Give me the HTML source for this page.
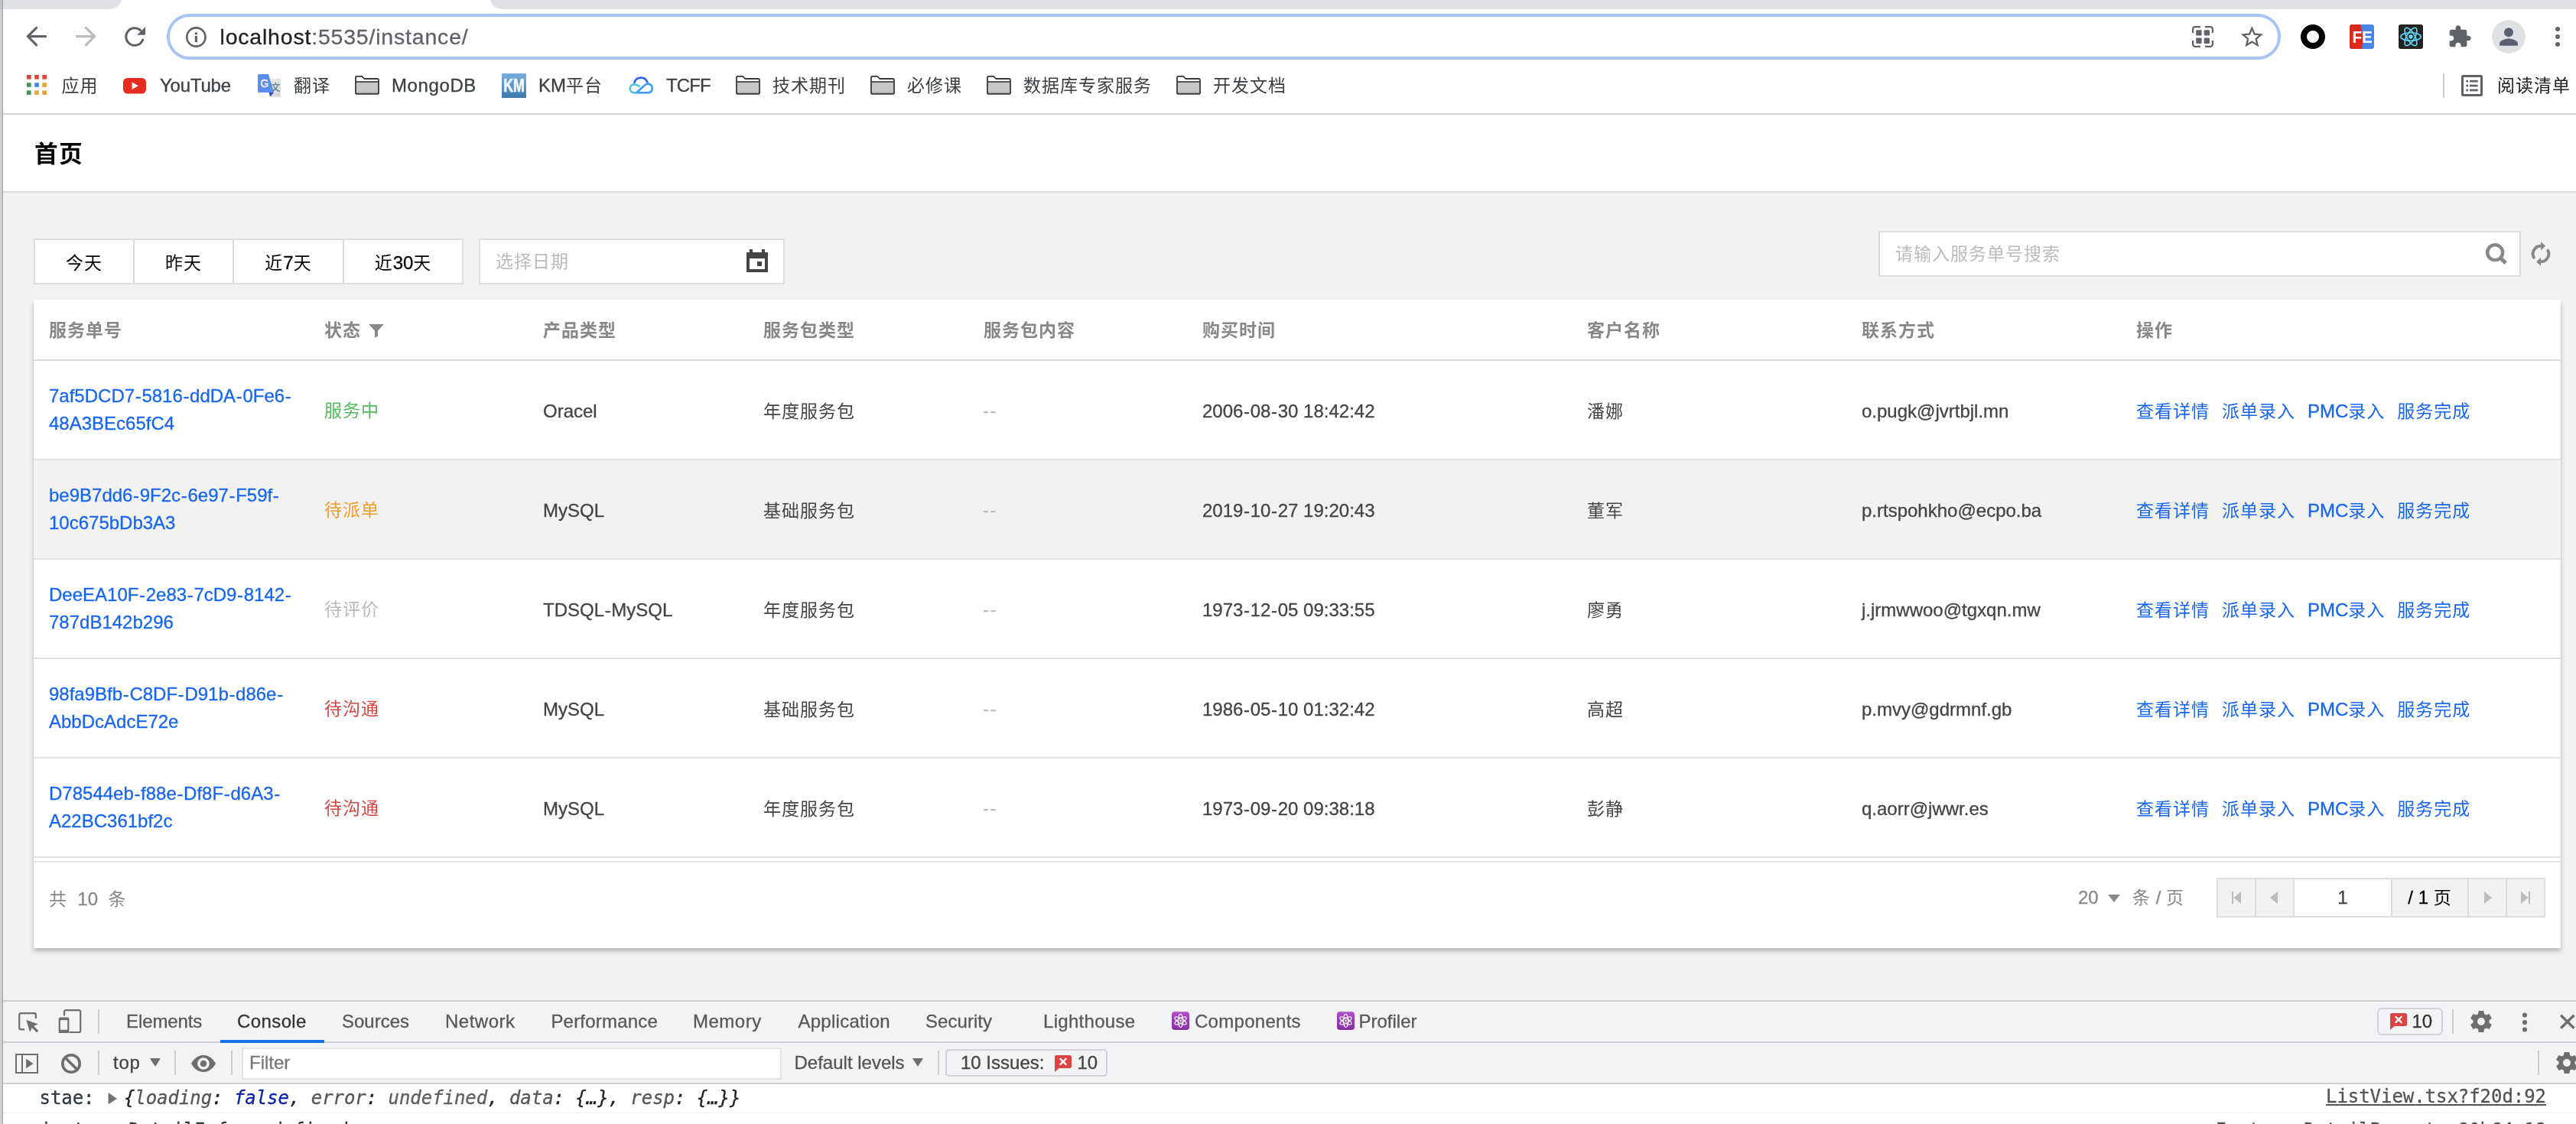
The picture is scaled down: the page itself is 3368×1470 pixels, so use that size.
<!DOCTYPE html>
<html lang="zh-CN">
<head>
<meta charset="utf-8">
<title>首页</title>
<style>
*{box-sizing:border-box;margin:0;padding:0}
html,body{width:3368px;height:1470px;overflow:hidden;background:#fff}
body{position:relative;-webkit-text-stroke:.3px;font-family:"Liberation Sans","Noto Sans CJK SC",sans-serif;font-size:24px;color:#444;-webkit-font-smoothing:antialiased}
.abs{position:absolute}
svg{display:block;position:absolute;overflow:visible}
a{color:#1766f2;text-decoration:none}
.cj{font-size:.9583em;letter-spacing:.0435em;-webkit-text-stroke:0}

/* ---------- window edge ---------- */
#edge{left:0;top:0;width:4px;height:1470px;background:linear-gradient(90deg,#d2d2d2 0,#cfcfcf 2.4px,#a4a4a4 2.9px,#a9a9a9 3.6px,#e8e8e8 4px)}
#edgetop{left:0;top:0;width:4px;height:12px;background:linear-gradient(90deg,#c1c5c9 0,#bfc3c7 2.4px,#9b9da0 2.9px,#a0a2a5 3.6px,#d5d7db 4px)}

/* ---------- chrome top ---------- */
#tabL{left:4px;top:-12px;width:156px;height:24px;background:#dfe1e5;border-bottom-right-radius:17px}
#tabR{left:640px;top:-12px;width:2728px;height:24px;background:#dfe1e5;border-bottom-left-radius:17px}
#tabwhite{left:4px;top:0;width:3364px;height:12px;background:#fff}
#omni{left:218px;top:18px;width:2764px;height:60px;border:4px solid #a6c4f6;border-radius:30px;background:#fff}
#url{left:287.5px;top:27.5px;font-size:28.5px;line-height:40px;color:#5f6368;white-space:nowrap;letter-spacing:.8px}
#url b{font-weight:400;color:#202124}
.bm{top:92px;height:40px;line-height:40px;font-size:24px;color:#3c4043;white-space:nowrap}
#bmline{left:4px;top:148px;width:3364px;height:2px;background:#d3d5d9}

/* ---------- page ---------- */
#pagebg{left:4px;top:252px;width:3364px;height:1056px;background:#f2f2f2}
#hdline{left:4px;top:250px;width:3364px;height:2px;background:#dcdcdc}
#title{left:45px;top:177px;font-size:32px;letter-spacing:1.5px;line-height:48px;font-weight:700;color:#000;font-family:"Liberation Sans","Noto Sans CJK SC",sans-serif}

.btn{top:312px;height:60px;border:2px solid #ddd;background:#fff;color:#000;text-align:center;line-height:59px;font-size:24px;white-space:nowrap}
#date{left:626px;top:312px;width:400px;height:60px;border:2px solid #ddd;background:#fff}
#date>span{white-space:nowrap;position:absolute;left:20px;top:0;line-height:56px;color:#bbb}
#search{left:2456px;top:302px;width:840px;height:60px;border:2px solid #ddd;background:#fff}
#search>span{white-space:nowrap;position:absolute;left:20px;top:0;line-height:56px;color:#bbb}

/* ---------- card / table ---------- */
#card{left:44px;top:392px;width:3304px;height:848px;background:#fff;box-shadow:0 4px 6px 0 rgba(48,50,62,.3)}
.th{top:.4px;height:78px;line-height:80px;font-weight:700;color:#888;white-space:nowrap}
.hline{left:0;width:3304px;height:2px;background:#ddd}
.row{left:0;width:3304px;height:128px}
.row.hover{background:#f2f2f2}
.row>div{position:absolute;white-space:nowrap;line-height:36px;top:48px}
.row>.id{top:28px;white-space:normal;width:330px}
.c1{left:20px}.c2{left:380px}.c3{left:666px}.c4{left:954px}.c5{left:1242px}.c6{left:1528px}.c7{left:2031px}.c8{left:2390px}.c9{left:2749px}
.row .c2{top:47px}
.row .c4,.row .c7,.row .c9{top:47.5px}
.hy{padding:0 .67px}
.row .c5{color:#bbb;top:47px;letter-spacing:1.4px;margin-left:-1px}
.c9 a{margin-right:16px}
.s-ok{color:#55b95f}.s-warn{color:#f19b2a}.s-wait{color:#bbb}.s-err{color:#d34842}
#foot{left:0;top:734px;width:3304px;height:2px;background:#e5e5e5}
#total{left:20px;top:766px;line-height:36px;color:#888;white-space:pre}
.pg{top:756px;height:52px;border:2px solid #ddd;background:#f2f2f2}

/* ---------- devtools ---------- */
#dt{left:4px;top:1308px;width:3364px;height:162px;background:#fff;font-family:"Liberation Sans",sans-serif}
#dt .bar{left:0;width:3364px;background:#f1f3f4}
#dt .ln{left:0;width:3364px;height:2px;background:#cbcdd1}
.tab{top:6px;height:44px;line-height:44px;font-size:24px;color:#585858;white-space:nowrap}
.mono{font-family:"DejaVu Sans Mono","Liberation Mono",monospace;font-size:24px;white-space:pre;line-height:36px;letter-spacing:-.05px}
</style>
</head>
<body>
<div id="root" style="position:absolute;left:0;top:0;width:3368px;height:1470px;will-change:transform">
<!-- window edge -->
<div class="abs" id="edge"></div>
<div class="abs" id="edgetop"></div>

<!-- tab strip -->
<div class="abs" id="tabwhite"></div>
<div class="abs" id="tabL"></div>
<div class="abs" id="tabR"></div>

<!-- CHROME-TOOLBAR -->
<svg style="left:30px;top:30px" width="36" height="36" viewBox="0 0 36 36"><path d="M17.6 6.4 6.4 17.6 17.6 28.8M7 17.6H29.6" fill="none" stroke="#5f6368" stroke-width="3.1" stroke-linecap="round" stroke-linejoin="miter"/></svg>
<svg style="left:94px;top:30px" width="36" height="36" viewBox="0 0 36 36"><path d="M18.4 6.4 29.6 17.6 18.4 28.8M29 17.6H6.4" fill="none" stroke="#bbbcbe" stroke-width="3.1" stroke-linecap="round" stroke-linejoin="miter"/></svg>
<svg style="left:158px;top:30px" width="36" height="36" viewBox="0 0 36 36"><path d="M28.6 22.2A11.3 11.3 0 1 1 25.6 9.6" fill="none" stroke="#5f6368" stroke-width="3.1" stroke-linecap="round"/><path d="M32 5.2V15.8H21.2Z" fill="#5f6368"/></svg>
<div class="abs" id="omni"></div>
<svg style="left:242px;top:34px" width="29" height="29" viewBox="0 0 29 29"><circle cx="14.4" cy="14.5" r="12.1" fill="none" stroke="#5f6368" stroke-width="2.6"/><rect x="12.8" y="8.4" width="3.2" height="2.9" fill="#5f6368"/><rect x="12.8" y="13" width="3.2" height="8.2" fill="#5f6368"/></svg>
<div class="abs" id="url"><b>localhost</b>:5535/instance/</div>
<!-- qr -->
<svg style="left:2866px;top:34px" width="28" height="28" viewBox="0 0 28 28"><g fill="none" stroke="#5f6368" stroke-width="2.2"><path d="M1.1 9V4.2a3.1 3.1 0 0 1 3.1-3.1H11"/><path d="M17 1.1h6.8a3.1 3.1 0 0 1 3.1 3.1V9"/><path d="M26.9 19v4.8a3.1 3.1 0 0 1-3.1 3.1H17"/><path d="M11 26.9H4.2a3.1 3.1 0 0 1-3.1-3.1V19"/></g><g fill="#5f6368"><rect x="5.2" y="5.2" width="7.4" height="7.4" rx="1"/><rect x="15.6" y="5.2" width="7.4" height="7.4" rx="1"/><rect x="5.2" y="15.6" width="7.4" height="7.4" rx="1"/><rect x="15.6" y="15.6" width="7.4" height="7.4" rx="1"/></g></svg>
<!-- star -->
<svg style="left:2926.6px;top:30.8px" width="34.8" height="34.8" viewBox="0 0 24 24"><path d="M22 9.24l-7.19-.62L12 2 9.19 8.63 2 9.24l5.46 4.73L5.82 21 12 17.27 18.18 21l-1.63-7.03L22 9.24zM12 15.4l-3.76 2.27 1-4.28-3.32-2.88 4.38-.38L12 6.1l1.71 4.04 4.38.38-3.32 2.88 1 4.28L12 15.4z" fill="#5f6368"/></svg>
<!-- ext: black ring -->
<svg style="left:3008px;top:32px" width="32" height="32" viewBox="0 0 32 32"><circle cx="16" cy="16" r="12" fill="none" stroke="#000" stroke-width="8"/></svg>
<!-- ext: FE -->
<svg style="left:3072px;top:32px" width="32" height="32" viewBox="0 0 32 32"><rect width="32" height="32" rx="3.5" fill="#4a86e8"/><path d="M3.5 0H14.5Q19 16 16 32H3.5A3.5 3.5 0 0 1 0 28.5V3.5A3.5 3.5 0 0 1 3.5 0Z" fill="#dc2a1d"/><text x="3.4" y="23.6" font-family="Liberation Sans,sans-serif" font-weight="700" font-size="21.5" fill="#fff" textLength="26.5" lengthAdjust="spacingAndGlyphs">FE</text></svg>
<!-- ext: react -->
<svg style="left:3136px;top:32px" width="32" height="32" viewBox="0 0 32 32"><rect width="32" height="32" rx="3" fill="#222"/><g fill="none" stroke="#61dafb" stroke-width="1.6"><ellipse cx="16" cy="16" rx="13.2" ry="5.2"/><ellipse cx="16" cy="16" rx="13.2" ry="5.2" transform="rotate(60 16 16)"/><ellipse cx="16" cy="16" rx="13.2" ry="5.2" transform="rotate(120 16 16)"/></g><circle cx="16" cy="16" r="2.7" fill="#61dafb"/></svg>
<!-- puzzle -->
<svg style="left:3200px;top:32px" width="32" height="32" viewBox="0 0 24 24"><path d="M20.5 11H19V7c0-1.1-.9-2-2-2h-4V3.5C13 2.120 11.880 1 10.5 1S8 2.120 8 3.5V5H4c-1.1 0-1.990.9-1.990 2v3.8H3.5c1.490 0 2.7 1.210 2.7 2.7s-1.210 2.7-2.7 2.7H2V20c0 1.1.9 2 2 2h3.8v-1.5c0-1.490 1.210-2.7 2.7-2.7 1.490 0 2.7 1.210 2.7 2.7V22H17c1.1 0 2-.9 2-2v-4h1.5c1.380 0 2.5-1.120 2.5-2.5S21.880 11 20.5 11z" fill="#5f6368"/></svg>
<!-- avatar -->
<svg style="left:3258px;top:26px" width="44" height="44" viewBox="0 0 44 44"><circle cx="22" cy="22" r="22" fill="#dfe1e5"/><circle cx="22" cy="16.2" r="6" fill="#5a6072"/><path d="M10 33.8v-2.6c0-4.5 8-6.8 12-6.8s12 2.3 12 6.8v2.6z" fill="#5a6072"/></svg>
<!-- menu -->
<svg style="left:3338px;top:32px" width="12" height="32" viewBox="0 0 12 32"><g fill="#5f6368"><circle cx="6" cy="6" r="3"/><circle cx="6" cy="16" r="3"/><circle cx="6" cy="26" r="3"/></g></svg>

<!-- BOOKMARKS -->
<svg width="0" height="0" style="left:0;top:0"><defs><symbol id="fold" viewBox="0 0 32 25"><rect x="1.9" y="8.6" width="28.2" height="14.6" fill="#c8c8c8"/><rect x="1.9" y="21" width="28.2" height="2.1" fill="#b2b2b2"/><path d="M1 2.3a1.5 1.5 0 0 1 1.5-1.5H9.2L12.2 4H29.5a1.5 1.5 0 0 1 1.5 1.5V22.45a1.5 1.5 0 0 1-1.5 1.5H2.5a1.5 1.5 0 0 1-1.5-1.5Z" fill="none" stroke="#383838" stroke-width="1.8" stroke-linejoin="round"/><path d="M1 8H31" stroke="#383838" stroke-width="1.7"/></symbol></defs></svg>
<svg style="left:35px;top:98px" width="26" height="26" viewBox="0 0 26 26"><g><rect x="0" y="0" width="5.6" height="5.6" fill="#db4437"/><rect x="10.2" y="0" width="5.6" height="5.6" fill="#db4437"/><rect x="20.4" y="0" width="5.6" height="5.6" fill="#db4437"/><rect x="0" y="10.2" width="5.6" height="5.6" fill="#3f9b4f"/><rect x="10.2" y="10.2" width="5.6" height="5.6" fill="#4285f4"/><rect x="20.4" y="10.2" width="5.6" height="5.6" fill="#e9a233"/><rect x="0" y="20.4" width="5.6" height="5.6" fill="#3f9b4f"/><rect x="10.2" y="20.4" width="5.6" height="5.6" fill="#e9a233"/><rect x="20.4" y="20.4" width="5.6" height="5.6" fill="#e9a233"/></g></svg>
<div class="abs bm" style="left:80.5px"><span class="cj">应用</span></div>
<svg style="left:161px;top:101.5px" width="30" height="21" viewBox="0 0 30 21"><rect width="30" height="20.5" rx="5.5" fill="#e62d20"/><path d="M11.6 5.6 19.8 10.3 11.6 15Z" fill="#fff"/></svg>
<div class="abs bm" style="left:209px;letter-spacing:-.2px">YouTube</div>
<svg style="left:336px;top:96px" width="32" height="32" viewBox="0 0 32 32"><defs><linearGradient id="trg" x1="0" y1="0" x2="1" y2="1"><stop offset="0" stop-color="#ececec"/><stop offset="1" stop-color="#d2d2d2"/></linearGradient></defs><rect x="17.2" y="7.1" width="13.6" height="23.7" rx="1.2" fill="url(#trg)"/><text x="18.3" y="23.3" font-family="Noto Sans CJK SC,sans-serif" font-size="12" fill="#5c7a89" stroke="#5c7a89" stroke-width=".3">文</text><path d="M15.5 25.1 22.3 24.5 17.3 30.8Z" fill="#3949ab"/><path d="M2.6 1.05H13.8Q14.9 1.05 15.2 2.1L22.3 25.1H2.6A1.5 1.5 0 0 1 1.1 23.6V2.55A1.5 1.5 0 0 1 2.6 1.05Z" fill="#5a8dee"/><text x="4.4" y="18.1" font-family="Liberation Sans,sans-serif" font-size="13.8" fill="#f5f3ec" stroke="#f5f3ec" stroke-width=".5">G</text></svg>
<div class="abs bm" style="left:384px"><span class="cj">翻译</span></div>
<svg class="fold" style="left:464px;top:99px" width="32" height="25" viewBox="0 0 32 25"><use href="#fold"/></svg>
<div class="abs bm" style="left:512px;letter-spacing:.6px">MongoDB</div>
<svg style="left:656px;top:96px" width="32" height="32" viewBox="0 0 32 32"><defs><linearGradient id="kmg" x1="0" y1="0" x2="0" y2="1"><stop offset="0" stop-color="#76aedd"/><stop offset=".55" stop-color="#5a96cb"/><stop offset="1" stop-color="#3b76ab"/></linearGradient></defs><rect width="32" height="32" fill="url(#kmg)"/><text x="2.3" y="24.3" font-family="Liberation Sans,sans-serif" font-weight="700" font-size="23.3" fill="#f4f8fc" stroke="#f4f8fc" stroke-width=".7" textLength="27.6" lengthAdjust="spacingAndGlyphs">KM</text></svg>
<div class="abs bm" style="left:704px">KM<span class="cj">平台</span></div>
<svg style="left:822px;top:100px" width="33" height="24" viewBox="0 0 33 24"><path d="M7.3 8.2A9 9 0 0 1 24.3 7.2" fill="none" stroke="#2a67f4" stroke-width="2.6" stroke-linecap="round"/><path d="M8.5 21.2H25.2A5.75 5.75 0 1 0 21.2 11.3L10.6 20.8" fill="none" stroke="#3c9af6" stroke-width="2.6" stroke-linecap="round" stroke-linejoin="round"/><path d="M13.6 12.8C11.8 11.2 9.6 10.5 7 10.5A5.35 5.35 0 0 0 7 21.2H10" fill="none" stroke="#4cc3d9" stroke-width="2.6" stroke-linecap="round"/></svg>
<div class="abs bm" style="left:871px;letter-spacing:-.9px">TCFF</div>
<svg class="fold" style="left:962px;top:99px" width="32" height="25" viewBox="0 0 32 25"><use href="#fold"/></svg>
<div class="abs bm" style="left:1010px"><span class="cj">技术期刊</span></div>
<svg class="fold" style="left:1138px;top:99px" width="32" height="25" viewBox="0 0 32 25"><use href="#fold"/></svg>
<div class="abs bm" style="left:1186px"><span class="cj">必修课</span></div>
<svg class="fold" style="left:1290px;top:99px" width="32" height="25" viewBox="0 0 32 25"><use href="#fold"/></svg>
<div class="abs bm" style="left:1338px"><span class="cj">数据库专家服务</span></div>
<svg class="fold" style="left:1538px;top:99px" width="32" height="25" viewBox="0 0 32 25"><use href="#fold"/></svg>
<div class="abs bm" style="left:1586px"><span class="cj">开发文档</span></div>
<div class="abs" style="left:3194px;top:96px;width:2px;height:32px;background:#cdcfd2"></div>
<svg style="left:3218px;top:98px" width="28" height="28" viewBox="0 0 28 28"><rect x="1.5" y="1.5" width="25" height="25" rx="1" fill="none" stroke="#5f6368" stroke-width="3"/><g fill="#5f6368"><rect x="6.3" y="6.8" width="2.7" height="2.7"/><rect x="11" y="6.8" width="10.7" height="2.7"/><rect x="6.3" y="12.7" width="2.7" height="2.7"/><rect x="11" y="12.7" width="10.7" height="2.7"/><rect x="6.3" y="18.6" width="2.7" height="2.7"/><rect x="11" y="18.6" width="10.7" height="2.7"/></g></svg>
<div class="abs bm" style="left:3265px;color:#202124;letter-spacing:-.5px"><span class="cj">阅读清单</span></div>

<div class="abs" id="bmline"></div>

<!-- page -->
<div class="abs" id="title"><span class="cj">首页</span></div>
<div class="abs" id="hdline"></div>
<div class="abs" id="pagebg"></div>

<!-- TOOLBAR -->
<div class="abs btn" style="left:44px;width:132px"><span class="cj">今天</span></div>
<div class="abs btn" style="left:174px;width:132px"><span class="cj">昨天</span></div>
<div class="abs btn" style="left:304px;width:146px"><span class="cj">近</span>7<span class="cj">天</span></div>
<div class="abs btn" style="left:448px;width:158px"><span class="cj">近</span>30<span class="cj">天</span></div>
<div class="abs" id="date"><span><span class="cj">选择日期</span></span>
<svg style="left:348px;top:12px" width="28" height="30" viewBox="0 0 28 30"><path d="M4 0h4v4h12V0h4v4h4v26H0V4h4Z M4 12v14h20V12Z M14 16h6v6h-6Z" fill="#444" fill-rule="evenodd"/></svg>
</div>
<div class="abs" id="search"><span><span class="cj">请输入服务单号搜索</span></span>
<svg style="left:791px;top:13.4px" width="28.8" height="28.8" viewBox="0 0 30 30"><circle cx="13.7" cy="13.7" r="10.4" fill="none" stroke="#888" stroke-width="4.6"/><path d="M20.6 20.6 28.2 28.2" stroke="#888" stroke-width="5.4"/></svg>
</div>
<svg style="left:3308px;top:314.2px" width="28" height="36" viewBox="0 0 28 36"><g fill="none" stroke="#888" stroke-width="3.9"><path d="M5.67 24.05A10.3 10.3 0 0 1 14.4 7.7"/><path d="M22.54 12.24A10.3 10.3 0 0 1 13.8 28.3"/></g><path d="M14.2 1.9 20 7.7 14.2 13.5Z" fill="#888"/><path d="M14 22.5 8.2 28.3 14 34.1Z" fill="#888"/></svg>

<!-- CARD -->
<div class="abs" id="card">
<div class="abs th c1"><span class="cj">服务单号</span></div>
<div class="abs th c2"><span class="cj">状态</span></div>
<div class="abs th c3"><span class="cj">产品类型</span></div>
<div class="abs th c4"><span class="cj">服务包类型</span></div>
<div class="abs th c5"><span class="cj">服务包内容</span></div>
<div class="abs th c6"><span class="cj">购买时间</span></div>
<div class="abs th c7"><span class="cj">客户名称</span></div>
<div class="abs th c8"><span class="cj">联系方式</span></div>
<div class="abs th c9"><span class="cj">操作</span></div>
<svg style="left:438px;top:32px" width="20" height="18" viewBox="0 0 20 18"><path d="M0 0H20L12 8.6V15.6L8 17.8V8.6Z" fill="#888"/></svg>
<div class="abs hline" style="top:78px;background:#dcdcdc"></div>
<div class="abs row" style="top:80px">
<div class="c1 id"><a>7af5DCD7<span class="hy">-</span>5816<span class="hy">-</span>ddDA<span class="hy">-</span>0Fe6<span class="hy">-</span><br>48A3BEc65fC4</a></div>
<div class="c2 s-ok"><span class="cj">服务中</span></div>
<div class="c3">Oracel</div><div class="c4"><span class="cj">年度服务包</span></div><div class="c5">--</div><div class="c6">2006<span class="hy">-</span>08<span class="hy">-</span>30 18:42:42</div><div class="c7"><span class="cj">潘娜</span></div><div class="c8">o.pugk@jvrtbjl.mn</div>
<div class="c9"><a><span class="cj">查看详情</span></a><a><span class="cj">派单录入</span></a><a>PMC<span class="cj">录入</span></a><a><span class="cj">服务完成</span></a></div>
</div>
<div class="abs hline" style="top:208px;background:#e2e2e2"></div>
<div class="abs row hover" style="top:210px">
<div class="c1 id"><a>be9B7dd6<span class="hy">-</span>9F2c<span class="hy">-</span>6e97<span class="hy">-</span>F59f<span class="hy">-</span><br>10c675bDb3A3</a></div>
<div class="c2 s-warn"><span class="cj">待派单</span></div>
<div class="c3">MySQL</div><div class="c4"><span class="cj">基础服务包</span></div><div class="c5">--</div><div class="c6">2019<span class="hy">-</span>10<span class="hy">-</span>27 19:20:43</div><div class="c7"><span class="cj">董军</span></div><div class="c8">p.rtspohkho@ecpo.ba</div>
<div class="c9"><a><span class="cj">查看详情</span></a><a><span class="cj">派单录入</span></a><a>PMC<span class="cj">录入</span></a><a><span class="cj">服务完成</span></a></div>
</div>
<div class="abs hline" style="top:338px;background:#e2e2e2"></div>
<div class="abs row" style="top:340px">
<div class="c1 id"><a>DeeEA10F<span class="hy">-</span>2e83<span class="hy">-</span>7cD9<span class="hy">-</span>8142<span class="hy">-</span><br>787dB142b296</a></div>
<div class="c2 s-wait"><span class="cj">待评价</span></div>
<div class="c3">TDSQL<span class="hy">-</span>MySQL</div><div class="c4"><span class="cj">年度服务包</span></div><div class="c5">--</div><div class="c6">1973<span class="hy">-</span>12<span class="hy">-</span>05 09:33:55</div><div class="c7"><span class="cj">廖勇</span></div><div class="c8">j.jrmwwoo@tgxqn.mw</div>
<div class="c9"><a><span class="cj">查看详情</span></a><a><span class="cj">派单录入</span></a><a>PMC<span class="cj">录入</span></a><a><span class="cj">服务完成</span></a></div>
</div>
<div class="abs hline" style="top:468px;background:#e2e2e2"></div>
<div class="abs row" style="top:470px">
<div class="c1 id"><a>98fa9Bfb<span class="hy">-</span>C8DF<span class="hy">-</span>D91b<span class="hy">-</span>d86e<span class="hy">-</span><br>AbbDcAdcE72e</a></div>
<div class="c2 s-err"><span class="cj">待沟通</span></div>
<div class="c3">MySQL</div><div class="c4"><span class="cj">基础服务包</span></div><div class="c5">--</div><div class="c6">1986<span class="hy">-</span>05<span class="hy">-</span>10 01:32:42</div><div class="c7"><span class="cj">高超</span></div><div class="c8">p.mvy@gdrmnf.gb</div>
<div class="c9"><a><span class="cj">查看详情</span></a><a><span class="cj">派单录入</span></a><a>PMC<span class="cj">录入</span></a><a><span class="cj">服务完成</span></a></div>
</div>
<div class="abs hline" style="top:598px;background:#e2e2e2"></div>
<div class="abs row" style="top:600px">
<div class="c1 id"><a>D78544eb<span class="hy">-</span>f88e<span class="hy">-</span>Df8F<span class="hy">-</span>d6A3<span class="hy">-</span><br>A22BC361bf2c</a></div>
<div class="c2 s-err"><span class="cj">待沟通</span></div>
<div class="c3">MySQL</div><div class="c4"><span class="cj">年度服务包</span></div><div class="c5">--</div><div class="c6">1973<span class="hy">-</span>09<span class="hy">-</span>20 09:38:18</div><div class="c7"><span class="cj">彭静</span></div><div class="c8">q.aorr@jwwr.es</div>
<div class="c9"><a><span class="cj">查看详情</span></a><a><span class="cj">派单录入</span></a><a>PMC<span class="cj">录入</span></a><a><span class="cj">服务完成</span></a></div>
</div>
<div class="abs hline" style="top:728px;background:#e2e2e2"></div>
<div class="abs" id="foot"></div>
<div class="abs" id="total"><span class="cj">共</span>  10  <span class="cj">条</span></div>
<div class="abs" id="psize" style="left:2673px;top:764px;line-height:36px;color:#888;white-space:nowrap">20</div>
<svg style="left:2712px;top:778px" width="16" height="10" viewBox="0 0 16 10"><path d="M0 0H16L8 10Z" fill="#888"/></svg>
<div class="abs" id="pper" style="left:2744px;top:764px;line-height:36px;color:#888;white-space:pre"><span class="cj">条</span> / <span class="cj">页</span></div>
<div class="abs pg" style="left:2854px;width:52px"><svg style="left:18px;top:16px" width="12" height="16" viewBox="0 0 12 16"><path d="M0 0H2V16H0Z M12 0V16L2.4 8Z" fill="#bbb"/></svg></div>
<div class="abs pg" style="left:2904px;width:52px"><svg style="left:18px;top:16px" width="10" height="16" viewBox="0 0 10 16"><path d="M10 0V16L0 8Z" fill="#bbb"/></svg></div>
<div class="abs pg" style="left:2954px;width:130px;background:#fff;color:#444;text-align:center;line-height:48px">1</div>
<div class="abs pg" style="left:3082px;width:102px;color:#000;text-align:center;line-height:48px;white-space:pre">/ 1 <span class="cj">页</span></div>
<div class="abs pg" style="left:3182px;width:52px"><svg style="left:20px;top:16px" width="10" height="16" viewBox="0 0 10 16"><path d="M0 0V16L10 8Z" fill="#bbb"/></svg></div>
<div class="abs pg" style="left:3232px;width:52px"><svg style="left:18px;top:16px" width="12" height="16" viewBox="0 0 12 16"><path d="M10 0H12V16H10Z M0 0V16L9.6 8Z" fill="#bbb"/></svg></div>
</div>

<!-- DEVTOOLS -->
<div class="abs" id="dt">
<div class="abs bar" style="top:0;height:110px"></div>
<div class="abs ln" style="top:0"></div>
<div class="abs ln" style="top:54px"></div>
<div class="abs ln" style="top:108px"></div>
<svg style="left:19px;top:15.2px" width="28" height="28" viewBox="0 0 28 28"><path d="M9 23.3H4.4a2.2 2.2 0 0 1-2.2-2.2V4.4A2.2 2.2 0 0 1 4.4 2.2H21.7A2.2 2.2 0 0 1 23.9 4.4V9" fill="none" stroke="#6e6e6e" stroke-width="2.2"/><path d="M11.4 11 26.6 16.3 21.2 18.9 27.2 24.9 24.9 27.2 18.9 21.2 16.1 26.8Z" fill="#6e6e6e"/></svg>
<svg style="left:71.6px;top:11.2px" width="32" height="33" viewBox="0 0 32 33"><path d="M8 9.6V4.2A2 2 0 0 1 10 2.2H27.2A2 2 0 0 1 29.2 4.2V29A2 2 0 0 1 27.2 31H15" fill="none" stroke="#6e6e6e" stroke-width="2.2"/><path d="M.7 13.6A2 2 0 0 1 2.7 11.6H12.4A2 2 0 0 1 14.4 13.6V32.1H.7Z" fill="#6e6e6e"/><rect x="2.9" y="15.2" width="9.3" height="12.6" fill="#f1f3f4"/></svg>
<div class="abs" style="left:124px;top:12px;width:2px;height:32px;background:#cdcdcd"></div>
<div class="abs tab" style="left:161px;letter-spacing:-0.1px">Elements</div>
<div class="abs tab" style="left:306px;letter-spacing:0.4px;color:#333">Console</div>
<div class="abs tab" style="left:443px;letter-spacing:0px">Sources</div>
<div class="abs tab" style="left:578px;letter-spacing:0.5px">Network</div>
<div class="abs tab" style="left:716.4px;letter-spacing:0.2px">Performance</div>
<div class="abs tab" style="left:902px;letter-spacing:0.5px">Memory</div>
<div class="abs tab" style="left:1039.4px;letter-spacing:0.28px">Application</div>
<div class="abs tab" style="left:1206px;letter-spacing:0.05px">Security</div>
<div class="abs tab" style="left:1360px;letter-spacing:0.3px">Lighthouse</div>
<div class="abs tab" style="left:1558px;letter-spacing:0.28px">Components</div>
<div class="abs tab" style="left:1772.5px;letter-spacing:0px">Profiler</div>
<div class="abs" style="left:284px;top:52px;width:136px;height:4px;background:#1a73e8"></div>
<svg style="left:1527.7px;top:15px" width="23" height="24" viewBox="0 0 23 24"><defs><linearGradient id="pg1531" x1="0" y1="0" x2="0" y2="1"><stop offset="0" stop-color="#c061d6"/><stop offset=".18" stop-color="#a844c2"/><stop offset="1" stop-color="#8b2ea5"/></linearGradient></defs><rect width="23" height="24" rx="4" fill="url(#pg1531)"/><g fill="none" stroke="#fff" stroke-width="1.25"><ellipse cx="11.5" cy="12" rx="8.6" ry="3.2" transform="rotate(90 11.5 12)"/><ellipse cx="11.5" cy="12" rx="8.6" ry="3.2" transform="rotate(30 11.5 12)"/><ellipse cx="11.5" cy="12" rx="8.6" ry="3.2" transform="rotate(150 11.5 12)"/></g><circle cx="11.5" cy="12" r="1.5" fill="#e9c9f1"/></svg>
<svg style="left:1743.5px;top:15px" width="23" height="24" viewBox="0 0 23 24"><defs><linearGradient id="pg1747" x1="0" y1="0" x2="0" y2="1"><stop offset="0" stop-color="#c061d6"/><stop offset=".18" stop-color="#a844c2"/><stop offset="1" stop-color="#8b2ea5"/></linearGradient></defs><rect width="23" height="24" rx="4" fill="url(#pg1747)"/><g fill="none" stroke="#fff" stroke-width="1.25"><ellipse cx="11.5" cy="12" rx="8.6" ry="3.2" transform="rotate(90 11.5 12)"/><ellipse cx="11.5" cy="12" rx="8.6" ry="3.2" transform="rotate(30 11.5 12)"/><ellipse cx="11.5" cy="12" rx="8.6" ry="3.2" transform="rotate(150 11.5 12)"/></g><circle cx="11.5" cy="12" r="1.5" fill="#e9c9f1"/></svg>
<div class="abs" style="left:3104px;top:10px;width:86px;height:36px;border:2px solid #cfd1d4;border-radius:6px"></div>
<svg style="left:3121px;top:17px" width="22" height="22" viewBox="0 0 22 22"><path d="M2.5 0H19.5A2.5 2.5 0 0 1 22 2.5V14.5A2.5 2.5 0 0 1 19.5 17H5.5L0 22V2.5A2.5 2.5 0 0 1 2.5 0Z" fill="#dc4345"/><path d="M6.8 4.2 15.2 12.6M15.2 4.2 6.8 12.6" stroke="#fff" stroke-width="2.3"/></svg>
<div class="abs tab" style="left:3149.5px;color:#333">10</div>
<div class="abs" style="left:3202px;top:12px;width:2px;height:32px;background:#cdcdcd"></div>
<svg style="left:3226px;top:14px" width="28" height="28" viewBox="0 0 24 24"><path d="M19.43 12.98c.04-.32.07-.64.07-.98s-.03-.66-.07-.98l2.110-1.650c.19-.15.24-.42.120-.64l-2-3.460c-.12-.22-.39-.3-.61-.22l-2.490 1c-.52-.4-1.080-.73-1.690-.98l-.38-2.650C14.460 2.180 14.250 2 14 2h-4c-.25 0-.46.180-.49.420l-.38 2.650c-.61.250-1.170.59-1.690.98l-2.490-1c-.23-.09-.49 0-.61.220l-2 3.460c-.13.220-.07.49.12.64l2.110 1.650c-.04.32-.07.650-.07.980s.03.660.07.980l-2.110 1.650c-.19.150-.24.420-.12.640l2 3.460c.12.220.39.300.61.220l2.490-1c.52.400 1.080.73 1.690.98l.38 2.650c.03.240.24.420.49.420h4c.25 0 .46-.18.490-.42l.38-2.650c.61-.25 1.170-.59 1.690-.98l2.490 1c.23.09.49 0 .61-.22l2-3.460c.12-.22.07-.49-.12-.64l-2.110-1.650zM12 15.5c-1.930 0-3.5-1.570-3.5-3.5s1.570-3.5 3.5-3.5 3.5 1.570 3.5 3.5-1.570 3.5-3.5 3.5z" fill="#6e6e6e" transform="translate(12 12) scale(1.21) translate(-12 -12)"/></svg>
<svg style="left:3293px;top:14.5px" width="8" height="28" viewBox="0 0 8 28"><g fill="#6e6e6e"><circle cx="4" cy="4.5" r="3.1"/><circle cx="4" cy="14" r="3.1"/><circle cx="4" cy="23.5" r="3.1"/></g></svg>
<svg style="left:3341.5px;top:17px" width="24" height="22" viewBox="0 0 24 22"><path d="M2.1 2.8 19.5 19.7M19.5 2.8 2.1 19.7" stroke="#6e6e6e" stroke-width="3.5" fill="none"/></svg>
<svg style="left:16px;top:70px" width="30" height="26" viewBox="0 0 30 26"><rect x="1" y="1" width="28" height="24" fill="none" stroke="#6e6e6e" stroke-width="2"/><path d="M9 1V25" stroke="#6e6e6e" stroke-width="2"/><path d="M14.2 6.8 23.6 13 14.2 19.2Z" fill="#6e6e6e"/></svg>
<svg style="left:76px;top:70px" width="26" height="26" viewBox="0 0 26 26"><circle cx="13" cy="13" r="11.2" fill="none" stroke="#6e6e6e" stroke-width="3.6"/><path d="M5.2 5.2 20.8 20.8" stroke="#6e6e6e" stroke-width="3.6"/></svg>
<div class="abs" style="left:124px;top:66px;width:2px;height:32px;background:#cdcdcd"></div>
<div class="abs" style="left:224px;top:66px;width:2px;height:32px;background:#cdcdcd"></div>
<div class="abs" style="left:298px;top:66px;width:2px;height:32px;background:#cdcdcd"></div>
<div class="abs" style="left:1222px;top:66px;width:2px;height:32px;background:#cdcdcd"></div>
<div class="abs tab" style="left:144px;top:60px;color:#444;letter-spacing:.8px">top</div>
<svg style="left:192px;top:76px" width="14" height="11" viewBox="0 0 14 11"><path d="M0 0H14L7 11Z" fill="#6e6e6e"/></svg>
<svg style="left:246px;top:71.5px" width="32" height="22" viewBox="0 0 32 22"><path d="M0 11C3.5 4.2 9.2 0 16 0S28.5 4.2 32 11C28.5 17.8 22.8 22 16 22S3.5 17.8 0 11Z M16 3.2a7.8 7.8 0 1 0 0 15.6a7.8 7.8 0 1 0 0-15.6Z" fill="#6e6e6e" fill-rule="evenodd"/><circle cx="16" cy="11" r="4.3" fill="#6e6e6e"/></svg>
<div class="abs" style="left:312px;top:62px;width:706px;height:42px;background:#fff;border:2px solid #e3e4e6"></div>
<div class="abs tab" style="left:322px;top:60px;color:#777">Filter</div>
<div class="abs tab" style="left:1034.5px;top:59.5px;color:#555">Default levels</div>
<svg style="left:1188.5px;top:76px" width="14" height="11" viewBox="0 0 14 11"><path d="M0 0H14L7 11Z" fill="#6e6e6e"/></svg>
<div class="abs" style="left:1232px;top:64px;width:212px;height:36px;border:2px solid #cfd1d4;border-radius:5px"></div>
<div class="abs tab" style="left:1252px;top:59.5px;color:#444">10 Issues:</div>
<svg style="left:1375px;top:71.5px" width="22" height="22" viewBox="0 0 22 22"><path d="M2.5 0H19.5A2.5 2.5 0 0 1 22 2.5V14.5A2.5 2.5 0 0 1 19.5 17H5.5L0 22V2.5A2.5 2.5 0 0 1 2.5 0Z" fill="#dc4345"/><path d="M6.8 4.2 15.2 12.6M15.2 4.2 6.8 12.6" stroke="#fff" stroke-width="2.3"/></svg>
<div class="abs tab" style="left:1404.5px;top:59.5px;color:#444">10</div>
<div class="abs" style="left:3314px;top:66px;width:2px;height:32px;background:#cdcdcd"></div>
<svg style="left:3338px;top:68px" width="28" height="28" viewBox="0 0 24 24"><path d="M19.43 12.98c.04-.32.07-.64.07-.98s-.03-.66-.07-.98l2.110-1.650c.19-.15.24-.42.120-.64l-2-3.460c-.12-.22-.39-.3-.61-.22l-2.490 1c-.52-.4-1.080-.73-1.690-.98l-.38-2.650C14.460 2.180 14.250 2 14 2h-4c-.25 0-.46.180-.49.420l-.38 2.650c-.61.250-1.170.59-1.690.98l-2.490-1c-.23-.09-.49 0-.61.220l-2 3.460c-.13.220-.07.49.12.64l2.110 1.650c-.04.32-.07.650-.07.980s.03.660.07.980l-2.110 1.650c-.19.150-.24.420-.12.640l2 3.460c.12.220.39.300.61.220l2.490-1c.52.400 1.080.73 1.690.98l.38 2.650c.03.240.24.420.49.420h4c.25 0 .46-.18.490-.42l.38-2.650c.61-.25 1.170-.59 1.690-.98l2.490 1c.23.09.49 0 .61-.22l2-3.460c.12-.22.07-.49-.12-.64l-2.110-1.650zM12 15.5c-1.930 0-3.5-1.570-3.5-3.5s1.570-3.5 3.5-3.5 3.5 1.570 3.5 3.5-1.570 3.5-3.5 3.5z" fill="#6e6e6e" transform="translate(12 12) scale(1.21) translate(-12 -12)"/></svg>
<div class="abs mono" style="left:47.5px;top:108px;color:#303942">stae: <span style="color:#727272;font-size:20px;vertical-align:3px;display:inline-block;width:24px;text-indent:3px;transform:scale(.92,1.22)">&#9654;</span><i style="color:#222">{<span style="color:#565656">loading</span>: <span style="color:#0d22aa">false</span>, <span style="color:#565656">error</span>: <span style="color:#5e5e5e">undefined</span>, <span style="color:#565656">data</span>: {…}, <span style="color:#565656">resp</span>: {…}}</i></div>
<div class="abs mono" style="left:3037px;top:108px;color:#545454;text-decoration:underline">ListView.tsx?f20d:92</div>
<div class="abs" style="left:0;top:147px;width:3364px;height:1px;background:#f0f0f0"></div>
<div class="abs mono" style="left:49px;top:152px;color:#303942">instanceDetailInfo undefined</div>
<div class="abs mono" style="left:2893px;top:152px;color:#545454;text-decoration:underline">InstanceDetailPage.tsx?0b64:18</div>
</div>

</div>
</body>
</html>
